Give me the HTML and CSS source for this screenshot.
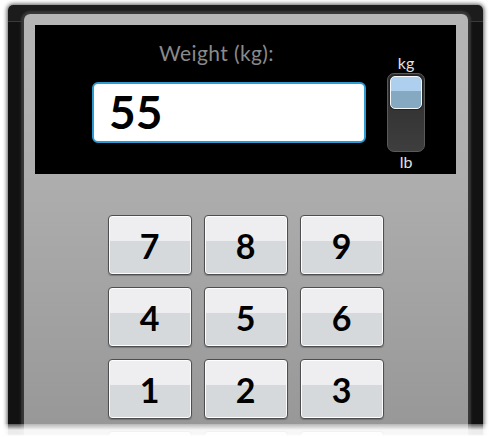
FILE: index.html
```html
<!DOCTYPE html>
<html lang="en">

<head>
    <meta charset="UTF-8">
    <meta name="viewport" content="width=device-width, initial-scale=1.0">
    <title>Weight keypad</title>

    <link rel="stylesheet" href="styles.css">
</head>

<body>
    <div class="device">
        <div class="panel">
            <section class="display">
                <div class="entry">
                    <label class="entry-label" for="weight">Weight (kg):</label>
                    <div class="entry-box" id="weight">55</div>
                </div>
                <div class="unit-switch">
                    <span class="unit">kg</span>
                    <div class="track">
                        <div class="knob"></div>
                    </div>
                    <span class="unit">lb</span>
                </div>
            </section>

            <main class="keypad">
                <button class="key">7</button>
                <button class="key">8</button>
                <button class="key">9</button>
                <button class="key">4</button>
                <button class="key">5</button>
                <button class="key">6</button>
                <button class="key">1</button>
                <button class="key">2</button>
                <button class="key">3</button>
                <span class="key key-hidden"></span>
                <span class="key key-hidden"></span>
                <span class="key key-hidden"></span>
            </main>
        </div>
    </div>

    <div class="fade"></div>
</body>

</html>
```

FILE: styles.css
```css
html,
body {
    height: 437px;
    margin: 0;
    overflow: hidden;
    background-color: #fff;
}

body {
    position: relative;
    font-family: Lato, 'Open Sans', sans-serif;
}

.device {
    width: 444px;
    margin: 5px 0 0 8px;
    padding: 9px 15px 0 16px;
    background: linear-gradient(to bottom, #1c1c1c 16px, #3a3a3a 16px 17px, #121212 17px);
    border-radius: 5px 5px 0 0;
    box-shadow: 0 0 4px 1px rgba(20, 20, 20, 0.7);
}

.panel {
    padding: 11px 12px 20px 11px;
    background: linear-gradient(to bottom, #b5b5b5, #adadad 170px, #989898 410px);
    border-radius: 6px 6px 0 0;
    box-shadow: 0 0 2px 3px #383838;
}

.display {
    display: flex;
    height: 149px;
    background-color: #000;
}

.entry {
    display: flex;
    flex-direction: column;
    width: 274px;
    margin-left: 57px;
}

.entry-label {
    margin: 16px 25px 0 0;
    color: #8a8a8a;
    font-size: 21px;
    letter-spacing: 0.4px;
    line-height: 24px;
    text-align: center;
}

.entry-box {
    box-sizing: border-box;
    height: 61px;
    margin-top: 17px;
    padding-left: 15px;
    background-color: #fff;
    border: 2px solid #2b9bd4;
    border-radius: 6px;
    color: #000;
    font-size: 46px;
    font-weight: 700;
    line-height: 56px;
}

.unit-switch {
    display: flex;
    flex-direction: column;
    align-items: center;
    width: 38px;
    margin-left: 21px;
}

.unit {
    color: #e2e2e2;
    font-size: 16px;
    line-height: 18px;
}

.unit:first-child {
    margin-top: 29px;
}

.unit:last-child {
    margin-top: 1px;
}

.track {
    box-sizing: border-box;
    width: 38px;
    height: 79px;
    margin-top: 1px;
    padding: 2px;
    background: linear-gradient(to bottom, #2c2c2c, #3e3e3e);
    border: 1px solid #5a5a5a;
    border-radius: 7px;
}

.knob {
    box-sizing: border-box;
    height: 33px;
    background: linear-gradient(to bottom, #aed0ee 45%, #86a9c2 45%);
    border: 1px solid #f4f8fb;
    border-radius: 5px;
    box-shadow: 0 0 0 1px #222;
}

.keypad {
    display: grid;
    grid-template-columns: repeat(3, 84px);
    grid-auto-rows: 60px;
    gap: 12px;
    justify-content: center;
    margin-top: 41px;
}

.key {
    box-sizing: border-box;
    padding: 0;
    background: linear-gradient(to bottom, #eeeef0 43%, #d5d9dc 43%);
    border: 1px solid #4e4e4e;
    border-radius: 4px;
    box-shadow: inset 0 0 0 1px #fdfdfd, 0 1px 1px rgba(0, 0, 0, 0.25);
    color: #000;
    font-family: Lato, 'Open Sans', sans-serif;
    font-size: 34px;
    font-weight: 700;
}

.fade {
    position: absolute;
    top: 424px;
    left: 0;
    right: 0;
    bottom: 0;
    background: linear-gradient(to bottom, rgba(255, 255, 255, 0.3), rgba(255, 255, 255, 0.92) 6px, rgba(255, 255, 255, 0.92) 10px, #fff 12px);
}
```
